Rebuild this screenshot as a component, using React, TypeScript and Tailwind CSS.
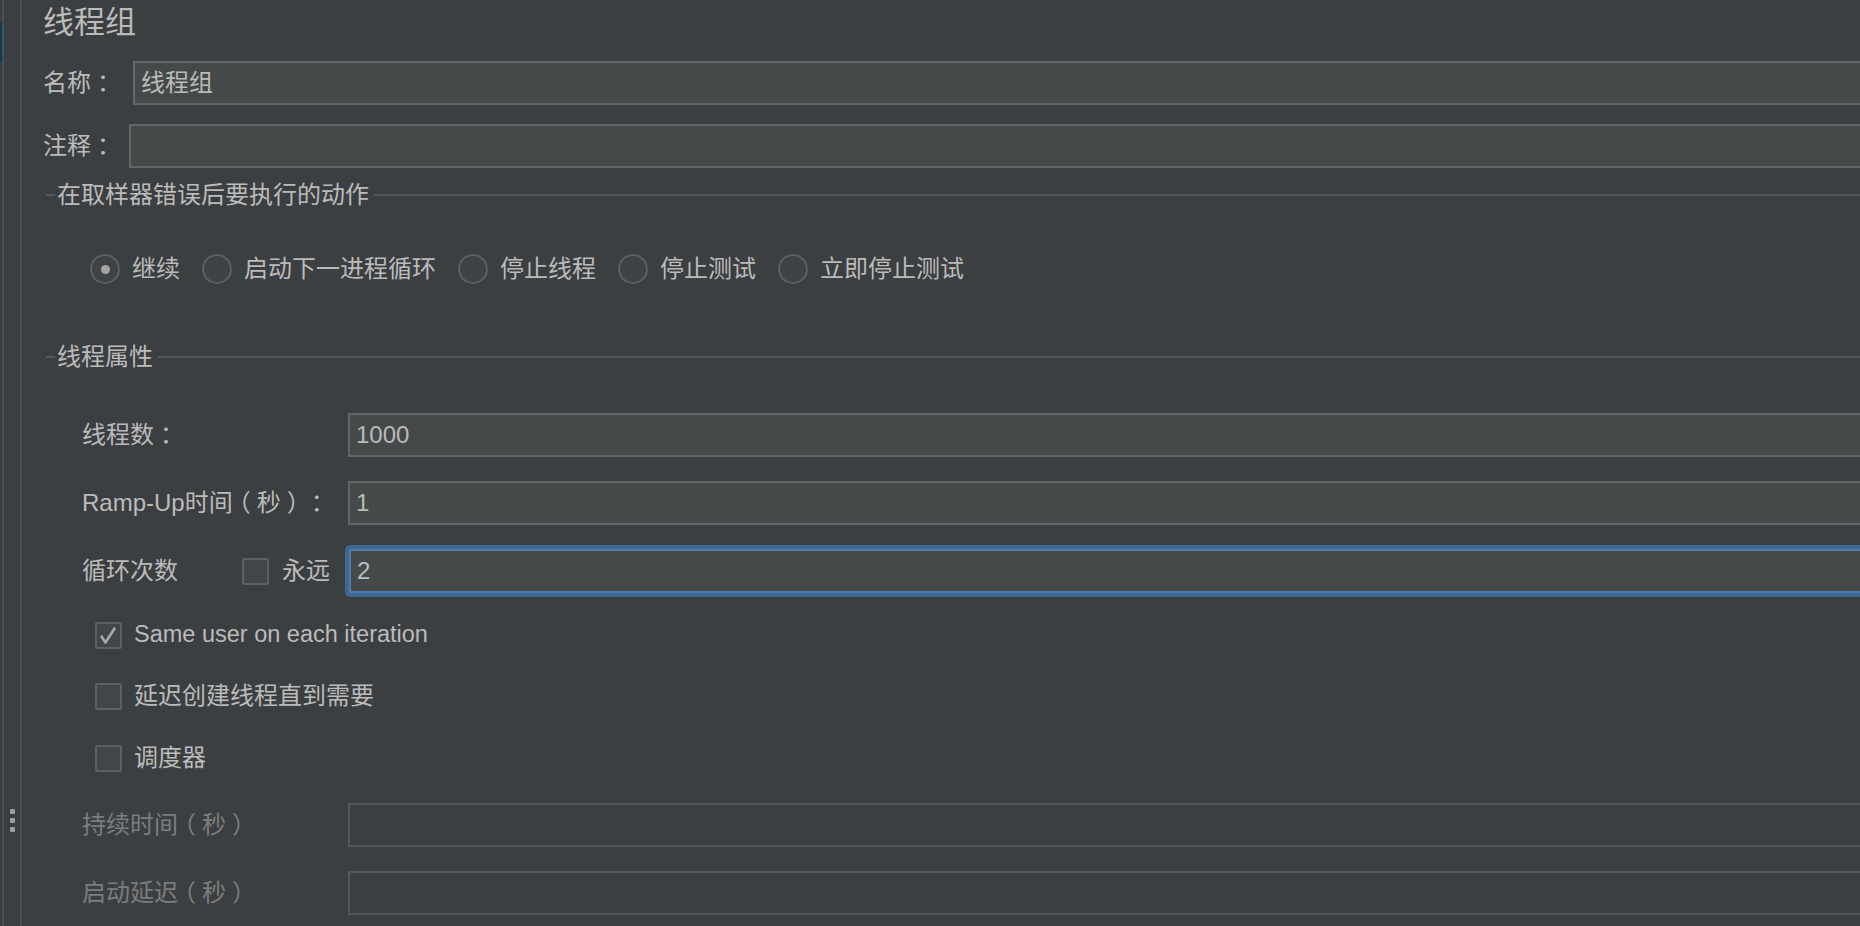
// JMeter "线程组" (Thread Group) editor, Darcula look.
import type { ReactNode } from 'react';

const LABEL = 'text-[24px] leading-none text-[#bbbbbb] whitespace-nowrap';

// Mac-style centred full-width punctuation: half-width glyph centred in a 1em box.
function P({ children }: { children: string }) {
  return <span className="inline-block w-[1em] text-center [font-feature-settings:'halt']">{children}</span>;
}

function Field({ value = '', disabled = false, focused = false }: { value?: string; disabled?: boolean; focused?: boolean }) {
  const tone = focused
    ? 'rounded-[2px] border-2 border-[#4d7bab] bg-[#45494a] shadow-[0_0_0_4px_#3d6891]'
    : disabled
      ? 'border-2 border-[#54575a] bg-[#3c3f41]'
      : 'border-2 border-[#636567] bg-[#45494a]';
  return (
    <div className={`-mr-[8px] flex h-[44px] flex-1 items-center pl-[6px] ${tone}`}>
      <span className="text-[24px] leading-none text-[#bbbbbb]">{value}</span>
    </div>
  );
}

function Legend({ children }: { children: ReactNode }) {
  return (
    <div className="flex h-[24px] items-center pl-[3px]">
      <div className="h-[2px] w-[9px] bg-[#55585a]" />
      <span className={`ml-[2px] ${LABEL}`}>{children}</span>
      <div className="ml-[5px] h-[2px] flex-1 bg-[#55585a]" />
    </div>
  );
}

function Radio({ label, checked = false }: { label: string; checked?: boolean }) {
  return (
    <div className="flex items-center gap-[12px]">
      <span className="flex h-[30px] w-[30px] items-center justify-center rounded-full border-2 border-[#5c5f61] bg-[#404345]">
        {checked && <span className="h-[9px] w-[9px] rounded-full bg-[#a4a4a4]" />}
      </span>
      <span className={LABEL}>{label}</span>
    </div>
  );
}

function Check({ checked = false }: { checked?: boolean }) {
  return (
    <span className="flex h-[27px] w-[27px] shrink-0 items-center justify-center rounded-[2px] border-2 border-[#5d6062] bg-[#42464a]">
      {checked && (
        <svg width="23" height="23" viewBox="0 0 23 23" fill="none">
          <path d="M4.5 12.5 L8.5 18.5 L17.5 4.5" stroke="#a9a9a9" strokeWidth="2.6" strokeLinecap="round" strokeLinejoin="round" />
        </svg>
      )}
    </span>
  );
}

function CheckRow({ label, checked = false, className = '', latin = false }: { label: string; checked?: boolean; className?: string; latin?: boolean }) {
  return (
    <div className={`ml-[52px] flex h-[28px] items-center gap-[12px] ${className}`}>
      <Check checked={checked} />
      <span className={`whitespace-nowrap leading-none text-[#bbbbbb] ${latin ? 'text-[23.5px]' : 'text-[24px]'}`}>
        {label}
      </span>
    </div>
  );
}

function SideStrip() {
  return (
    <div className="flex h-full w-[22px] shrink-0">
      <div className="w-[2px] pt-[22px]">
        <div className="h-[40px] w-[2px] bg-[#0f3a5a]" />
      </div>
      <div className="w-[2px] bg-[#4c4f51]" />
      <div className="flex w-[16px] flex-col items-center gap-[4px] pt-[809px]">
        <span className="h-[5px] w-[5px] rounded-[1px] bg-[#9c9c9c]" />
        <span className="h-[5px] w-[5px] rounded-[1px] bg-[#9c9c9c]" />
        <span className="h-[5px] w-[5px] rounded-[1px] bg-[#9c9c9c]" />
      </div>
      <div className="w-[2px] bg-[#4c4f51]" />
    </div>
  );
}

export default function App() {
  return (
    <div className="flex h-[926px] w-[1860px] overflow-hidden bg-[#3c3f41] font-['Liberation_Sans','Noto_Sans_CJK_SC',sans-serif]">
      <SideStrip />

      <div className="flex min-w-0 flex-1 flex-col overflow-hidden pl-[21px]">
        <div className="flex h-[44px] items-center text-[31px] leading-none text-[#bbbbbb]">线程组</div>

        <div className="mt-[17px] flex items-center">
          <span className={`w-[90px] ${LABEL}`}>
            名称<P>：</P>
          </span>
          <Field value="线程组" />
        </div>
        <div className="mt-[19px] flex items-center">
          <span className={`w-[86px] ${LABEL}`}>
            注释<P>：</P>
          </span>
          <Field />
        </div>

        <div className="mt-[15px]">
          <Legend>在取样器错误后要执行的动作</Legend>
        </div>
        <div className="ml-[47px] mt-[47px] flex h-[30px] items-center gap-[22px]">
          <Radio label="继续" checked />
          <Radio label="启动下一进程循环" />
          <Radio label="停止线程" />
          <Radio label="停止测试" />
          <Radio label="立即停止测试" />
        </div>

        <div className="mt-[61px]">
          <Legend>线程属性</Legend>
        </div>

        <div className="mt-[44px] flex items-center pl-[39px]">
          <span className={`w-[266px] ${LABEL}`}>
            线程数<P>：</P>
          </span>
          <Field value="1000" />
        </div>
        <div className="mt-[24px] flex items-center pl-[39px]">
          <span className={`w-[266px] ${LABEL}`}>
            Ramp-Up时间<P>（</P>秒<P>）</P><P>：</P>
          </span>
          <Field value="1" />
        </div>
        <div className="mt-[24px] flex items-center pl-[39px]">
          <div className="flex w-[267px] items-center">
            <span className={`w-[160px] ${LABEL}`}>循环次数</span>
            <Check />
            <span className={`ml-[13px] ${LABEL}`}>永远</span>
          </div>
          <Field value="2" focused />
        </div>

        <CheckRow className="mt-[28px]" label="Same user on each iteration" checked latin />
        <CheckRow className="mt-[33px]" label="延迟创建线程直到需要" />
        <CheckRow className="mt-[34px]" label="调度器" />

        <div className="mt-[31px] flex items-center pl-[39px]">
          <span className="w-[266px] whitespace-nowrap text-[24px] leading-none text-[#7b7d7f]">
            持续时间<P>（</P>秒<P>）</P>
          </span>
          <Field disabled />
        </div>
        <div className="mt-[24px] flex items-center pl-[39px]">
          <span className="w-[266px] whitespace-nowrap text-[24px] leading-none text-[#7b7d7f]">
            启动延迟<P>（</P>秒<P>）</P>
          </span>
          <Field disabled />
        </div>
      </div>
    </div>
  );
}
